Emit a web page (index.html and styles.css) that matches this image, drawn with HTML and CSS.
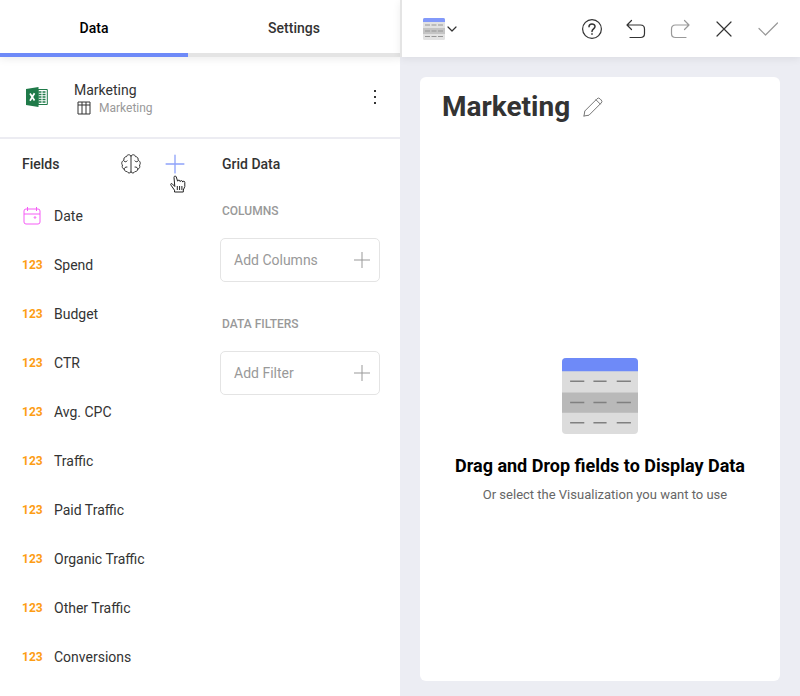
FILE: index.html
```html
<!DOCTYPE html>
<html lang="en">
<head>
<meta charset="utf-8">
<meta name="viewport" content="width=device-width, initial-scale=1">
<title>Marketing</title>
<link rel="stylesheet" href="styles.css">
</head>
<body>
<svg class="defs" aria-hidden="true">
  <symbol id="plus" viewBox="0 0 18 18"><path d="M9 1v16M1 9h16"/></symbol>
  <symbol id="grid" viewBox="0 0 75 75">
    <rect width="75" height="75" rx="4" fill="#dcdcdc"/>
    <path d="M0 13V4a4 4 0 0 1 4-4h67a4 4 0 0 1 4 4v9z" fill="#6e8af8"/>
    <path d="M0 34h75v20H0z" fill="#b9b9b9"/>
    <path d="M8 23h14M31 23h13M54 23h14M8 44h14M31 44h13M54 44h14M8 64h14M31 64h13M54 64h14" stroke="#808080" stroke-width="1.5"/>
  </symbol>
  <symbol id="grid-small" viewBox="0 0 22 22">
    <rect width="22" height="22" rx="1.500" fill="#e2e2e2"/>
    <path d="M0 4V1.500Q0 0 1.500 0h19Q22 0 22 1.500V4z" fill="#8299fa"/>
    <path d="M0 10h22v6H0z" fill="#c4c4c4"/>
    <path d="M2 7h5M8.500 7h5M15 7h5M2 13h5M8.500 13h5M15 13h5M2 18.500h5M8.500 18.500h5M15 18.500h5" stroke="#969696" stroke-width="1.200"/>
  </symbol>
</svg>
<div class="app">
  <aside class="editor">
    <nav class="tabs">
      <button class="tab tab-active" type="button">Data</button>
      <button class="tab" type="button">Settings</button>
    </nav>
    <section class="source">
      <svg class="excel" viewBox="0 0 22 20" aria-hidden="true">
        <path d="M12 2.500h9.300v15H12z" fill="#fff" stroke="#1f7a49"/>
        <path d="M12.500 5h3M12.500 7.500h3M12.500 10h3M12.500 12.500h3M12.500 15h3M16.500 5h3M16.500 7.500h3M16.500 10h3M16.500 12.500h3M16.500 15h3" stroke="#1f7a49" stroke-width="1.600"/>
        <path d="M0 2 12.500 0v20L0 18z" fill="#1f7a49"/>
        <path d="m4 6.500 4.500 7M8.500 6.300 4 13.700" fill="none" stroke="#fff" stroke-width="1.700"/>
      </svg>
      <div class="source-text">
        <div class="source-name">Marketing</div>
        <div class="source-sheet">
          <svg class="sheet-icon" viewBox="0 0 14 14" aria-hidden="true"><path d="M1 1h12v12H1zM1 4h12M5 1v12M9 1v12"/></svg>
          <span>Marketing</span>
        </div>
      </div>
      <button class="icon-btn" type="button" aria-label="More options">
        <svg class="dots" viewBox="0 0 4 16"><path d="M1 1h2v2H1zM1 7h2v2H1zM1 13h2v2H1z"/></svg>
      </button>
    </section>
    <div class="columns">
      <section class="fields">
        <header class="section-head">
          <h2>Fields</h2>
          <button class="icon-btn" type="button" aria-label="Insights">
            <svg class="line brain" viewBox="0 0 20 20"><path d="M10 2C9 0 5.800 .4 5.600 2.600 3.500 2.600 2.300 4.600 3 6.300 .8 7 0 9.500 1.500 11c-.8 1.800 0 3.800 1.800 4.200.2 1.800 1.500 2.600 2.800 2.300C7 19.500 9.200 19.500 10 18M10 2c1-2 4.200-1.600 4.400.6C16.500 2.600 17.700 4.600 17 6.300c2.200.7 3 3.200 1.500 4.700.8 1.800 0 3.800-1.800 4.200-.2 1.800-1.500 2.600-2.800 2.300C13 19.500 10.800 19.500 10 18M10 2v16M3.500 7.500c1 .6 2 .4 2.600-.6M16.500 7.500c-1 .6-2 .4-2.600-.6M3.300 15.200c0-1.500 1-2.400 2.700-2.200M16.700 15.200c0-1.500-1-2.400-2.700-2.200"/></svg>
          </button>
          <button class="icon-btn add-field" type="button" aria-label="Add field">
            <svg class="line add-icon"><use href="#plus"/></svg>
            <svg class="pointer" viewBox="0 0 16 18" aria-hidden="true"><path d="M4.800 11.500 2.200 8.800C1 8 .3 9.200 1 10.200l3.500 5V17h8.800v-2l1.500-3.500V7.300c0-1.400-1.900-1.500-2.100-.2 0-1.800-2.200-2-2.500-.5 0-1.800-2.300-2-2.600-.4L6.300 2C5.900.5 3.800.8 4 2.500zM7.300 11v4M9.600 11v4M11.900 11v4"/></svg>
          </button>
        </header>
        <ul class="field-list">
          <li><svg class="calendar" viewBox="0 0 18 18" aria-hidden="true"><path d="M3 2h12q2 0 2 2v11q0 2-2 2H3q-2 0-2-2V4q0-2 2-2zM1 7h16M4.500 0v4M13.500 0v4"/><circle cx="12" cy="10.500" r=".8"/></svg><span>Date</span></li>
          <li><span class="num">123</span><span>Spend</span></li>
          <li><span class="num">123</span><span>Budget</span></li>
          <li><span class="num">123</span><span>CTR</span></li>
          <li><span class="num">123</span><span>Avg. CPC</span></li>
          <li><span class="num">123</span><span>Traffic</span></li>
          <li><span class="num">123</span><span>Paid Traffic</span></li>
          <li><span class="num">123</span><span>Organic Traffic</span></li>
          <li><span class="num">123</span><span>Other Traffic</span></li>
          <li><span class="num">123</span><span>Conversions</span></li>
        </ul>
      </section>
      <section class="grid-data">
        <header class="section-head"><h2>Grid Data</h2></header>
        <h3>COLUMNS</h3>
        <button class="drop" type="button"><span>Add Columns</span><svg class="drop-plus"><use href="#plus"/></svg></button>
        <h3>DATA FILTERS</h3>
        <button class="drop" type="button"><span>Add Filter</span><svg class="drop-plus"><use href="#plus"/></svg></button>
      </section>
    </div>
  </aside>
  <main class="preview">
    <header class="toolbar">
      <button class="icon-btn chart-type" type="button" aria-label="Visualization type">
        <svg class="chart-icon"><use href="#grid-small"/></svg>
        <svg class="line chevron" viewBox="0 0 10 6"><path d="m1 1 4 4 4-4"/></svg>
      </button>
      <div class="actions">
        <button class="icon-btn" type="button" aria-label="Help"><svg class="line tool" viewBox="0 0 20 20"><circle cx="10" cy="10" r="9.400"/><path d="M7 7.800C7 4.100 13 4.200 13 7.600c0 2.300-3 2.400-3 5M10 14.800v.4" stroke-width="1.500"/></svg></button>
        <button class="icon-btn" type="button" aria-label="Undo"><svg class="line tool" viewBox="0 0 20 20"><path d="M5.500 1.500 1 6l4.500 4.500M1 6h13.500q4 0 4 4v4.500q0 4-4 4H4"/></svg></button>
        <button class="icon-btn faded" type="button" aria-label="Redo"><svg class="line tool" viewBox="0 0 20 20"><path d="M14.500 1.500 19 6l-4.500 4.500M19 6H5.500q-4 0-4 4v4.500q0 4 4 4H16"/></svg></button>
        <button class="icon-btn" type="button" aria-label="Close"><svg class="line tool" viewBox="0 0 20 20"><path d="m3 3 14 14M17 3 3 17"/></svg></button>
        <button class="icon-btn faded" type="button" aria-label="Apply"><svg class="line tool" viewBox="0 0 20 20"><path d="m1 9.500 6.500 6.500L19.500 4"/></svg></button>
      </div>
    </header>
    <section class="card">
      <header class="card-head">
        <h1>Marketing</h1>
        <button class="icon-btn faded" type="button" aria-label="Rename"><svg class="line tool pencil" viewBox="0 0 20 20"><path d="M1 19l.8-5L14 1.800q1.500-1.500 3 0l1.200 1.200q1.500 1.500 0 3L6 18.200 1 19M13 2.800l4.200 4.200"/></svg></button>
      </header>
      <div class="empty">
        <svg class="empty-icon" aria-hidden="true"><use href="#grid"/></svg>
        <h2>Drag and Drop fields to Display Data</h2>
        <p>Or select the Visualization you want to use</p>
      </div>
    </section>
  </main>
</div>
</body>
</html>
```
FILE: styles.css
```css
* { box-sizing: border-box; }
body {
  margin: 0;
  font-family: Roboto, "Liberation Sans", sans-serif;
  font-size: 14px;
  line-height: 20px;
  color: #333;
  background: #fff;
}
h1, h2, h3, p, ul { margin: 0; padding: 0; }
button {
  font: inherit;
  color: inherit;
  background: none;
  border: 0;
  padding: 0;
}
svg { display: block; flex: none; }
.defs { position: absolute; width: 0; height: 0; }
.app {
  display: grid;
  grid-template-columns: 1fr 1fr;
  min-height: 100vh;
}
.line {
  fill: none;
  stroke: #333;
  stroke-width: 1.2;
  stroke-linecap: round;
  stroke-linejoin: round;
}
.icon-btn { display: flex; align-items: center; }

.tabs {
  display: grid;
  grid-template-columns: 47fr 53fr;
  height: 57px;
  box-shadow: 0 2px 8px rgba(0, 0, 0, .08);
}
.tab {
  font-weight: 500;
  padding-top: 3px;
  border-bottom: 4px solid #e4e4e4;
}
.tab-active { color: #000; border-color: #6e8af8; }

.source {
  display: flex;
  align-items: center;
  height: 82px;
  padding: 0 20px 0 26px;
  border-bottom: 2px solid #ececf2;
}
.excel { width: 22px; height: 20px; }
.source-text { flex: 1; margin-left: 26px; padding-top: 4px; }
.source-name { line-height: 18px; }
.source-sheet {
  display: flex;
  align-items: center;
  gap: 8px;
  padding-left: 3px;
  font-size: 12px;
  line-height: 18px;
  color: #999;
}
.sheet-icon { width: 14px; height: 14px; fill: none; stroke: #333; }
.dots { width: 4px; height: 16px; margin-right: 3px; fill: #333; }

.columns { display: grid; grid-template-columns: 1fr 1fr; }
.fields { padding-left: 22px; }
.grid-data { padding: 0 20px; }
.section-head { display: flex; align-items: center; height: 50px; }
.section-head h2 {
  flex: 1;
  font-size: 14px;
  font-weight: 500;
}
.brain { width: 20px; height: 20px; stroke-width: 1; }
.add-field { position: relative; margin: 0 15px 0 24px; }
.add-icon { width: 20px; height: 20px; stroke: #8fa3fa; }
.pointer {
  position: absolute;
  left: 5px;
  top: 21px;
  width: 16px;
  height: 18px;
  fill: #fff;
  stroke: #222;
}
.field-list { list-style: none; margin-top: 2px; }
.field-list li {
  display: grid;
  grid-template-columns: 20px 1fr;
  column-gap: 12px;
  align-items: center;
  height: 49px;
}
.calendar { width: 18px; height: 18px; margin-left: 1px; fill: none; stroke: #f55cf5; }
.num { font-size: 12px; font-weight: 700; color: #fd9d14; }

.grid-data .section-head { padding-left: 2px; }
.grid-data h3 {
  padding: 12px 2px 17px;
  font-size: 12px;
  font-weight: 500;
  line-height: 20px;
  color: #999;
}
.drop {
  display: flex;
  align-items: center;
  justify-content: space-between;
  width: 100%;
  height: 44px;
  margin-bottom: 20px;
  padding: 0 8px 0 13px;
  border: 1px solid #e4e4e4;
  border-radius: 5px;
  color: #999;
}
.drop-plus { width: 18px; height: 18px; fill: none; stroke: #999; stroke-width: 1; }

.preview { display: flex; flex-direction: column; background: #ecedf3; }
.toolbar {
  display: flex;
  align-items: center;
  justify-content: space-between;
  height: 57px;
  padding: 0 22px 0 21px;
  border-left: 2px solid #e4e4e4;
  background: #fff;
  box-shadow: 0 2px 8px rgba(0, 0, 0, .07);
}
.chart-type { gap: 2px; }
.chart-icon { width: 22px; height: 22px; }
.chevron { width: 10px; height: 6px; }
.actions { display: flex; gap: 24px; }
.tool { width: 20px; height: 20px; }
.faded .line { stroke: #999; }
.faded .pencil { stroke: #777; stroke-width: 1; }
.card {
  display: flex;
  flex: 1;
  flex-direction: column;
  margin: 20px 20px 15px;
  border-radius: 6px;
  background: #fff;
}
.card-head { display: flex; align-items: center; gap: 13px; height: 60px; padding: 0 22px; }
.card-head h1 { font-size: 28px; line-height: 32px; font-weight: 700; }
.empty {
  display: flex;
  flex: 1;
  flex-direction: column;
  align-items: center;
  justify-content: center;
  padding-top: 44px;
  text-align: center;
}
.empty-icon { width: 76px; height: 76px; }
.empty h2 { margin-top: 20px; font-size: 18px; line-height: 24px; font-weight: 700; color: #000; }
.empty p { margin-top: 7px; padding-left: 10px; font-size: 13px; color: #666; }
```
